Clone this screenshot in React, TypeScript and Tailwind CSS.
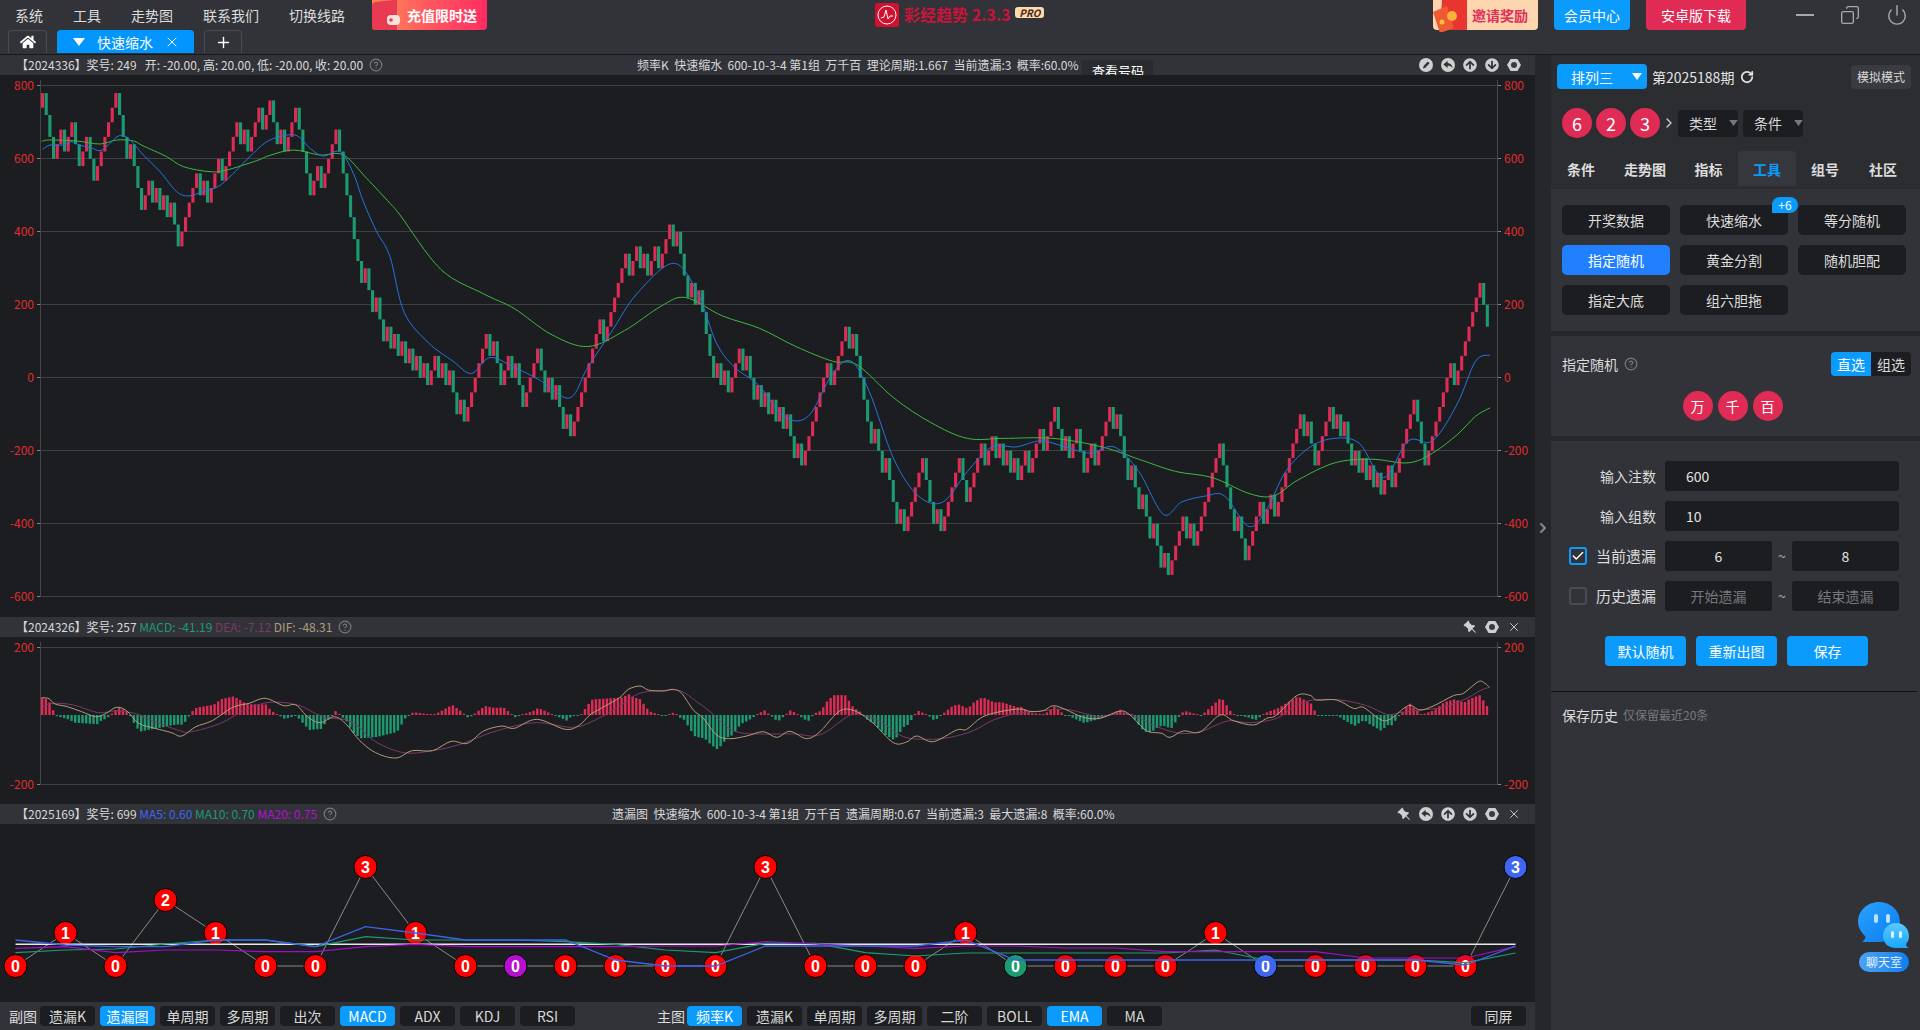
import React from 'react';
import { ChevronRight, CircleHelp, Check, Copy, Plus, Power, RotateCw, X } from 'lucide-react';
import { FaHome, FaArrowCircleUp, FaArrowCircleDown } from 'react-icons/fa';
import { BsPinAngleFill } from 'react-icons/bs';

type Pt = [number, number];

const curve = (pts: Pt[]) => {
  let d = `M${pts[0][0]} ${pts[0][1]}`;
  for (let i = 0; i < pts.length - 1; i++) {
    const p0 = pts[i - 1] || pts[i];
    const p1 = pts[i];
    const p2 = pts[i + 1];
    const p3 = pts[i + 2] || p2;
    d += `C${p1[0] + (p2[0] - p0[0]) / 6} ${p1[1] + (p2[1] - p0[1]) / 6} ${p2[0] - (p3[0] - p1[0]) / 6} ${p2[1] - (p3[1] - p1[1]) / 6} ${p2[0]} ${p2[1]}`;
  }
  return d;
};

const interp = (pts: Pt[], x: number) => {
  if (x <= pts[0][0]) return pts[0][1];
  for (let i = 0; i < pts.length - 1; i++) {
    if (x <= pts[i + 1][0]) {
      const t = (x - pts[i][0]) / (pts[i + 1][0] - pts[i][0]);
      return pts[i][1] + (pts[i + 1][1] - pts[i][1]) * t;
    }
  }
  return pts[pts.length - 1][1];
};

const S = 1920 / 1568;
const fromShot = (a: number[][]) => a.map(([x, y]) => [x * S, y * S] as Pt);

// main chart: each bar goes +40 or -60, so the steps are fixed
const BAR_GAP = 3.667;
const UP = 14.6;
const DOWN = 21.9;
const firstBars = 'RGGGRRGRRGGRRGGRRRRRRGGGRGGGRRGRGRGRGGRRRRRGRGRRRGRRRRGRGRRRGRRGGRGRRRGGGGRRGRRRRGGGGGG';

const priceTrack = fromShot([
  [285, 190], [295, 235], [305, 255], [315, 262], [325, 285], [340, 285], [355, 300], [370, 315], [380, 330], [392, 278],
  [405, 290], [415, 305], [425, 320], [438, 278], [445, 315], [458, 335], [465, 340], [475, 300], [490, 270], [505, 232],
  [520, 208], [535, 202], [550, 185], [560, 225], [570, 250], [580, 290], [590, 312], [605, 300], [620, 310], [632, 345],
  [645, 340], [657, 368], [665, 335], [678, 292], [690, 278], [700, 310], [712, 340], [725, 400], [735, 412], [748, 365],
  [760, 428], [775, 390], [790, 408], [800, 362], [815, 375], [830, 360], [845, 375], [860, 332], [870, 370], [885, 375],
  [900, 345], [915, 342], [925, 385], [935, 425], [955, 448], [975, 435], [995, 378], [1005, 415], [1020, 442], [1035, 410],
  [1058, 338], [1075, 365], [1090, 348], [1105, 370], [1125, 398], [1150, 325], [1160, 368], [1175, 340], [1190, 292], [1208, 234], [1217, 282],
]);

const candles = (() => {
  const out: { x: number; y: number; h: number; up: boolean }[] = [];
  let y = 107.7;
  for (let i = 0; i < 395; i++) {
    const x = 41 + i * BAR_GAP;
    let up: boolean;
    if (i < firstBars.length) up = firstBars[i] === 'R';
    else {
      const target = interp(priceTrack, x) + 12 * Math.sin(i * 0.62) + 7 * Math.sin(i * 0.19 + 1);
      up = y > target;
    }
    const next = up ? y - UP : y + DOWN;
    out.push({ x, y: Math.min(y, next), h: up ? UP : DOWN, up });
    y = next;
  }
  return out;
})();

const blueLine: Pt[] = [
  ...[[128, 268], [150, 255], [190, 255], [215, 245], [240, 256], [270, 262], [300, 272], [325, 255], [355, 228], [385, 235], [430, 285], [480, 335], [530, 395], [565, 408], [600, 398], [650, 382], [690, 350], [760, 280], [810, 240], [885, 225], [930, 265], [970, 288], [1020, 275], [1060, 340], [1090, 425], [1130, 515], [1170, 590]].map(([x, y]) => [x / 3, 60 + y / 3] as Pt),
  ...fromShot([[330, 255], [350, 280], [370, 295], [385, 305], [400, 292], [420, 300], [440, 310], [465, 325], [480, 300], [500, 270], [520, 240], [550, 215], [570, 240], [585, 280], [600, 300], [620, 315], [640, 340], [660, 340], [680, 305], [695, 295], [710, 320], [730, 375], [750, 405], [770, 410], [790, 385], [810, 365], [830, 365], [850, 360], [870, 365], [890, 370], [910, 365], [930, 385], [950, 420], [965, 410], [985, 405], [1000, 405], [1020, 430], [1035, 415], [1050, 385], [1070, 365], [1090, 358], [1110, 362], [1130, 390], [1150, 360], [1170, 360], [1190, 330], [1205, 295], [1217, 290]]),
];

const greenLine: Pt[] = [
  ...[[125, 244], [150, 240], [230, 243], [300, 252], [350, 240], [400, 243], [430, 258], [500, 290], [550, 320], [630, 335], [680, 330], [770, 302], [810, 286], [880, 270], [960, 285], [1030, 285], [1100, 355], [1170, 430], [1200, 465]].map(([x, y]) => [x / 3, 60 + y / 3] as Pt),
  ...fromShot([[360, 220], [395, 240], [420, 252], [450, 273], [480, 283], [510, 270], [540, 250], [560, 243], [590, 258], [620, 268], [650, 283], [680, 295], [700, 298], [730, 325], [760, 345], [790, 358], [820, 358], [860, 358], [900, 365], [930, 375], [960, 385], [990, 390], [1020, 403], [1040, 405], [1060, 392], [1090, 378], [1120, 375], [1150, 378], [1170, 370], [1190, 355], [1205, 340], [1217, 333]]),
];

// macd curves, read in three pieces
const macdPieces = (a: number[][], b: number[][], c: number[][]) => [
  ...a.map(([x, y]) => [x / 2.45, 600 + y / 3] as Pt).filter(p => p[0] < 620),
  ...b.map(([x, y]) => [620 + x / 3, 660 + y / 3] as Pt).filter(p => p[0] < 1100),
  ...c.map(([x, y]) => [1100 + x / 3, 660 + y / 3] as Pt),
];

const difLine = macdPieces(
  [[105, 293], [120, 296], [135, 312], [165, 320], [200, 335], [235, 350], [260, 340], [285, 322], [310, 332], [340, 370], [380, 385], [420, 398], [445, 408], [480, 380], [520, 362], [570, 322], [610, 310], [650, 295], [695, 317], [725, 315], [755, 352], [785, 368], [820, 350], [850, 375], [880, 420], [920, 458], [970, 474], [1010, 452], [1060, 452], [1105, 424], [1145, 430], [1185, 393], [1230, 378], [1260, 385], [1315, 358], [1385, 388], [1420, 375], [1445, 345], [1480, 320], [1520, 295]],
  [[0, 112], [25, 88], [60, 78], [85, 90], [130, 93], [160, 88], [185, 100], [220, 150], [250, 175], [290, 225], [330, 236], [380, 228], [430, 215], [470, 232], [510, 214], [560, 236], [600, 215], [640, 170], [670, 148], [710, 155], [760, 190], [820, 248], [860, 246], [890, 228], [940, 245], [1010, 210], [1040, 208], [1085, 172], [1140, 155], [1200, 147], [1230, 154], [1270, 152], [1300, 137], [1340, 150], [1390, 172], [1440, 178]],
  [[0, 175], [60, 153], [90, 165], [130, 205], [150, 216], [185, 220], [210, 232], [250, 213], [300, 216], [360, 165], [400, 182], [460, 195], [500, 175], [530, 165], [590, 107], [630, 106], [650, 120], [710, 120], [760, 145], [790, 142], [840, 178], [870, 178], [925, 137], [960, 150], [1000, 138], [1060, 107], [1090, 100], [1135, 65], [1155, 70], [1168, 82]],
);

const deaLine = macdPieces(
  [[105, 320], [130, 310], [180, 315], [240, 338], [280, 333], [330, 340], [370, 360], [440, 392], [470, 395], [540, 370], [600, 330], [660, 307], [730, 315], [790, 350], [860, 365], [920, 425], [990, 458], [1060, 452], [1130, 432], [1210, 395], [1310, 368], [1400, 382], [1450, 365], [1530, 318]],
  [[0, 138], [35, 112], [70, 97], [120, 92], [180, 92], [230, 125], [270, 155], [320, 200], [360, 218], [420, 222], [520, 222], [580, 228], [620, 215], [660, 185], [700, 162], [740, 168], [790, 190], [850, 230], [920, 238], [990, 232], [1060, 212], [1120, 180], [1190, 160], [1250, 155], [1330, 147], [1400, 162]],
  [[0, 170], [70, 160], [120, 175], [170, 200], [240, 220], [300, 215], [350, 195], [390, 182], [450, 188], [530, 175], [590, 135], [640, 120], [720, 120], [800, 137], [860, 163], [900, 158], [960, 150], [1030, 142], [1100, 115], [1140, 92], [1168, 82]],
);

const missLevels = [0, 1, 0, 2, 1, 0, 0, 3, 1, 0, 0, 0, 0, 0, 0, 3, 0, 0, 0, 1, 0, 0, 0, 0, 1, 0, 0, 0, 0, 0, 3];
const missColors: Record<number, string> = { 10: '#b810d0', 20: '#1c9b72', 25: '#3f66f0', 30: '#3f66f0' };
const ma5 = [940, 945, 946.7, 946.7, 940, 940, 946.7, 926.7, 933, 940, 940, 940, 960, 966, 966, 946, 946, 946, 946, 940, 960, 960, 960, 960, 960, 960, 960, 960, 960, 965, 946];
const ma10 = [952.7, 950, 949, 944, 940, 940, 946.7, 936.7, 940, 940, 940, 941.7, 944.3, 950, 952.7, 943.3, 943.3, 952.7, 956, 953, 953, 953, 953, 953, 950, 960, 960, 960, 960, 962.7, 953];
const ma20 = [948.3, 946.7, 952.7, 950, 950, 951.7, 951.7, 946.7, 944.3, 946.7, 946.7, 946.7, 946.7, 946, 946, 941.7, 944, 946, 948.3, 946, 946, 948, 948, 951.7, 951.7, 951.7, 951.7, 958, 958, 958, 946.7];
const missX = (i: number) => 15.5 + i * 50;
const maPoints = (a: number[]) => a.map((y, i) => `${missX(i)},${y}`).join(' ');

function Axis({ ticks, top, bottom }: { ticks: { v: number; y: number }[]; top: number; bottom: number }) {
  return (
    <g>
      {ticks.map(t => (
        <g key={t.v}>
          <line x1="40.5" x2="1497.5" y1={t.y + 0.5} y2={t.y + 0.5} stroke="#3f4045" />
          <line x1="37" x2="40" y1={t.y + 0.5} y2={t.y + 0.5} stroke="#888" />
          <line x1="1498" x2="1501" y1={t.y + 0.5} y2={t.y + 0.5} stroke="#888" />
          <text x="34" y={t.y + 4.5} textAnchor="end" fontSize="12" fill="#e22c2c">{t.v}</text>
          <text x="1504" y={t.y + 4.5} fontSize="12" fill="#e22c2c">{t.v}</text>
        </g>
      ))}
      <line x1="40.5" x2="40.5" y1={top} y2={bottom} stroke="#45464b" />
      <line x1="1497.5" x2="1497.5" y1={top} y2={bottom} stroke="#45464b" />
    </g>
  );
}

function MainChart() {
  const ticks = [800, 600, 400, 200, 0, -200, -400, -600].map((v, i) => ({ v, y: 85 + i * 73 }));
  return (
    <svg viewBox="0 75 1535 542" className="block w-[1535px] h-[542px] bg-[#1c1d21]">
      <Axis ticks={ticks} top={80} bottom={597} />
      {candles.map((c, i) => (
        <rect key={i} x={c.x} y={c.y} width="3.1" height={c.h} fill={c.up ? '#e02b55' : '#1c9b72'} />
      ))}
      <path d={curve(greenLine)} fill="none" stroke="#3eb83e" strokeWidth="1" />
      <path d={curve(blueLine)} fill="none" stroke="#2474e0" strokeWidth="1" />
    </svg>
  );
}

function MacdChart() {
  const ticks = [{ v: 200, y: 647 }, { v: -200, y: 784 }];
  const bars = Array.from({ length: 395 }, (_, i) => {
    const x = 41 + i * BAR_GAP;
    const v = (interp(deaLine, x) - interp(difLine, x)) * 2;
    return { x, v };
  });
  return (
    <svg viewBox="0 637 1535 167" className="block w-[1535px] h-[167px] bg-[#1c1d21]">
      <Axis ticks={ticks} top={642} bottom={785} />
      {bars.map((b, i) => {
        const h = Math.max(Math.abs(b.v), 1);
        return <rect key={i} x={b.x} y={b.v > 0 ? 715 - h : 715} width="2.4" height={h} fill={b.v > 0 ? '#e02b55' : '#1c9b72'} />;
      })}
      <path d={curve(deaLine)} fill="none" stroke="#7a3a66" strokeWidth="1" />
      <path d={curve(difLine)} fill="none" stroke="#b39b7a" strokeWidth="1" />
    </svg>
  );
}

function MissChart() {
  const levelY = (l: number) => 966 - l * 33;
  return (
    <svg viewBox="0 824 1535 178" className="block w-[1535px] h-[178px] bg-[#1c1d21]">
      <polyline points={missLevels.map((l, i) => `${missX(i)},${levelY(l)}`).join(' ')} fill="none" stroke="#8a8a8a" strokeWidth="1" />
      {missLevels.map((l, i) => (
        <g key={i}>
          <circle cx={missX(i)} cy={levelY(l)} r="11.5" fill={missColors[i] || '#ff0000'} stroke="#000" />
          <text x={missX(i)} y={levelY(l) + 5.5} textAnchor="middle" fontSize="16" fontWeight="700" fill="#fff" fontFamily="'Liberation Sans', sans-serif">{l}</text>
        </g>
      ))}
      <line x1={missX(0)} x2={missX(30)} y1="944.3" y2="944.3" stroke="#e8e8e8" strokeWidth="1.4" />
      <polyline points={maPoints(ma10)} fill="none" stroke="#1c9b72" strokeWidth="1.2" />
      <polyline points={maPoints(ma20)} fill="none" stroke="#a010c8" strokeWidth="1.2" />
      <polyline points={maPoints(ma5)} fill="none" stroke="#3b63e8" strokeWidth="1.3" />
    </svg>
  );
}

function PaneIcon({ name }: { name: string }) {
  if (name === 'up') return <FaArrowCircleUp className="w-[14px] h-[14px] text-[#cfcfcf]" />;
  if (name === 'down') return <FaArrowCircleDown className="w-[14px] h-[14px] text-[#cfcfcf]" />;
  if (name === 'pin') return <BsPinAngleFill className="w-[14px] h-[14px] text-[#cfcfcf] -scale-x-100" />;
  if (name === 'close') return <X className="w-[14px] h-[14px] text-[#cfcfcf]" strokeWidth={1.6} />;
  return (
    <svg viewBox="0 0 14 14" className="w-[14px] h-[14px]">
      {name === 'gear' ? (
        <>
          <path d="M3.6 1h6.8L14 7l-3.6 6H3.6L0 7z" fill="#cfcfcf" />
          <circle cx="7" cy="7" r="3" fill="#3a3b40" />
        </>
      ) : (
        <>
          <circle cx="7" cy="7" r="7" fill="#cfcfcf" />
          {name === 'pencil' && <path d="M4 10.5l.6-2.4 4.2-4.6 1.8 1.7-4.2 4.6z" fill="#333" />}
          {name === 'undo' && <path d="M2.4 6.4L6.6 2.8v2.3c3 .1 4.6 2 5 4.8-1.2-1.7-2.8-2.2-5-2.2v2.3z" fill="#333" />}
        </>
      )}
    </svg>
  );
}

function PaneHeader({ leftWidth, left, center, icons, button }: { leftWidth: number; left: React.ReactNode; center?: string; icons: string[]; button?: boolean }) {
  return (
    <div className="h-5 flex items-center overflow-hidden bg-[#313338] text-xs text-[#d8d8d8] whitespace-nowrap shrink-0">
      <div className="shrink-0 flex items-center gap-[6px] pl-[16px]" style={{ width: leftWidth }}>
        {left}
        <CircleHelp className="w-[14px] h-[14px] text-[#77787c]" />
      </div>
      {center && <div className="whitespace-pre">{center}</div>}
      {button && <div className="ml-1 mt-[10px] w-[71px] h-[20px] pt-[2px] bg-[#2a2b2f] text-center text-[13px] text-white">查看号码</div>}
      <div className="ml-auto flex items-center gap-2 pr-[14px]">
        {icons.map(n => <PaneIcon key={n} name={n} />)}
      </div>
    </div>
  );
}

function BarButton({ label, on }: { label: string; on?: boolean }) {
  return (
    <button className={`w-[55px] h-5 rounded text-sm flex items-center justify-center ${on ? 'bg-[#0a9bfd] text-white' : 'bg-[#1c1d21] text-[#d8d8d8]'}`}>
      {label}
    </button>
  );
}

function TopBar() {
  return (
    <div className="h-[55px] shrink-0 bg-[#313338] border-b border-[#17181b] relative">
      <div className="h-[30px] flex items-center">
        <div className="flex items-center gap-[30px] pl-[15px] text-sm text-[#dcdcdc]">
          <span>系统</span>
          <span>工具</span>
          <span>走势图</span>
          <span>联系我们</span>
          <span>切换线路</span>
        </div>
        <div className="ml-[27px] w-[115px] h-[30px] rounded-b relative bg-gradient-to-r from-[#ff8a50] via-[#ff5560] to-[#ff2a62] flex items-center pl-[35px] text-sm font-bold text-white">
          <svg viewBox="0 0 30 30" className="absolute left-0 top-0 w-[30px] h-[30px]">
            <path d="M0 5Q0 3 3 2L22 0h3v30H4Q0 30 0 27z" fill="#e83a50" />
            <path d="M25 12v14H6" fill="none" />
            <rect x="15" y="15" width="13" height="10" rx="4" fill="#fbe3dc" />
            <circle cx="19" cy="20" r="1.8" fill="#e83a50" />
          </svg>
          充值限时送
        </div>
        <div className="ml-auto flex items-center">
          <div className="w-[105px] h-[30px] rounded-b bg-[#fdd5ae] relative flex items-center justify-end pr-[10px] text-sm font-bold text-[#e0305a]">
            <svg viewBox="0 0 34 32" className="absolute left-0 top-0 w-[34px] h-[32px]">
              <path d="M9 0h25v30H7z" fill="#e8352f" />
              <path d="M0 12l14-6 7 22-14 5z" fill="#f05a32" />
              <circle cx="19" cy="16" r="5" fill="#f7b23b" />
              <circle cx="9" cy="22" r="2.5" fill="#f7c23b" />
            </svg>
            邀请奖励
          </div>
          <div className="ml-[16px] w-[76px] h-[30px] rounded-b bg-[#0a9bfd] flex items-center justify-center text-sm text-white">会员中心</div>
          <div className="ml-[16px] w-[100px] h-[30px] rounded-b bg-[#e02b55] flex items-center justify-center text-sm text-white">安卓版下载</div>
          <div className="w-[174px] flex items-center text-[#a8a8a8] pl-[50px]">
            <div className="w-[18px] h-[2px] bg-[#a8a8a8]" />
            <Copy className="ml-[26px] w-[20px] h-[20px] -scale-x-100" strokeWidth={1.6} />
            <Power className="ml-[26px] w-[22px] h-[22px]" strokeWidth={1.6} />
          </div>
        </div>
      </div>
      <div className="h-[23px] flex items-end pl-2 text-white">
        <div className="w-[39px] h-[23px] border border-b-0 border-[#4a4b50] rounded-t flex items-center justify-center">
          <FaHome className="w-[16px] h-[16px]" />
        </div>
        <div className="ml-[10px] w-[137px] h-[23px] bg-[#0095ff] rounded-t flex items-center pl-4 text-sm">
          <svg viewBox="0 0 12 8" className="w-3 h-2"><path d="M0 0h12L6 8z" fill="#fff" /></svg>
          <span className="ml-[12px]">快速缩水</span>
          <X className="ml-[11px] w-[16px] h-[16px]" strokeWidth={1.5} />
        </div>
        <div className="ml-[10px] w-[38px] h-[23px] border border-b-0 border-[#4a4b50] rounded-t flex items-center justify-center">
          <Plus className="w-[17px] h-[17px]" strokeWidth={2} />
        </div>
      </div>
      {/* logo */}
      <div className="absolute left-[875px] top-[3px] flex items-start">
        <svg viewBox="0 0 24 24" className="w-6 h-6">
          <rect width="24" height="24" rx="3" fill="#d0102e" />
          <circle cx="12" cy="12" r="9" fill="none" stroke="#fff" strokeWidth="1" />
          <path d="M6 15l3-1 2-7 2 9 2-3h3" fill="none" stroke="#fff" strokeWidth="1" />
        </svg>
        <span className="ml-[5px] mt-[-1px] text-base leading-6 font-bold text-[#c8143a]">彩经趋势 2.3.3</span>
        <span className="ml-[5px] mt-1 w-[29px] h-[11px] rounded-[3px] bg-[#fdd9b0] text-[10px] leading-[11px] font-bold italic text-[#4a2a10] text-center">PRO</span>
      </div>
    </div>
  );
}

function SelectBox({ label }: { label: string }) {
  return (
    <div className="w-[60px] h-[27px] bg-[#1c1d21] rounded flex items-center pl-[11px] text-sm text-[#d8d8d8]">
      {label}
      <svg viewBox="0 0 10 7" className="ml-[12px] w-[9px] h-[6px]"><path d="M0 0h10L5 7z" fill="#77787c" /></svg>
    </div>
  );
}

function Ball({ label, small }: { label: string; small?: boolean }) {
  return (
    <div className={`w-[30px] h-[30px] rounded-full bg-[#e02b55] flex items-center justify-center text-white ${small ? 'text-sm' : 'text-lg'}`}>
      {label}
    </div>
  );
}

function ToolBtn({ label, on, badge }: { label: string; on?: boolean; badge?: string }) {
  return (
    <button className={`relative h-[30px] rounded-[5px] text-sm flex items-center justify-center ${on ? 'bg-[#2080ff] text-white' : 'bg-[#1c1d21] text-[#dcdcdc]'}`}>
      {label}
      {badge && (
        <span className="absolute right-[-10px] top-[-8px] w-[26px] h-[16px] rounded-t-lg rounded-br-lg bg-[#0a9bfd] text-xs leading-4 text-white">{badge}</span>
      )}
    </button>
  );
}

function Field({ value, placeholder, center }: { value?: string; placeholder?: string; center?: boolean }) {
  return (
    <div className={`h-[30px] rounded-[3px] bg-[#1c1d21] flex items-center text-sm ${center ? 'w-[107px] justify-center' : 'w-[234px] pl-[21px]'} ${value ? 'text-[#e4e4e4]' : 'text-[#77787c]'}`}>
      {value || placeholder}
    </div>
  );
}

function SidePanel() {
  const tabs = [
    { label: '条件', w: 'w-[60px]' },
    { label: '走势图', w: 'w-[68px]' },
    { label: '指标', w: 'w-[59px]' },
    { label: '工具', w: 'w-[58px]', on: true },
    { label: '组号', w: 'w-[58px]' },
    { label: '社区', w: 'w-[58px]' },
  ];
  return (
    <div className="w-[369px] shrink-0 flex flex-col bg-[#323338] relative">
      <div className="h-[134px] bg-[#2b2d31] pt-[9px]">
        <div className="h-[25px] flex items-center pl-[6px] text-sm text-[#e4e4e4]">
          <div className="w-[90px] h-[25px] rounded-sm bg-[#0a9bfd] flex items-center pl-[14px] text-white">
            排列三
            <svg viewBox="0 0 10 7" className="ml-[19px] w-[10px] h-[7px]"><path d="M0 0h10L5 7z" fill="#fff" /></svg>
          </div>
          <span className="ml-[5px]">第2025188期</span>
          <RotateCw className="ml-[6px] w-[14px] h-[14px]" strokeWidth={3} />
          <div className="ml-auto mr-[9px] w-[60px] h-[24px] rounded-sm bg-[#3a3b40] flex items-center justify-center text-xs text-[#d8d8d8]">模拟模式</div>
        </div>
        <div className="mt-[19px] flex items-center pl-[11px]">
          <div className="flex gap-1">
            <Ball label="6" />
            <Ball label="2" />
            <Ball label="3" />
          </div>
          <ChevronRight className="w-[16px] h-[16px] ml-[1px] text-[#cfcfcf]" strokeWidth={2} />
          <div className="ml-[1px] flex gap-[5px]">
            <SelectBox label="类型" />
            <SelectBox label="条件" />
          </div>
        </div>
        <div className="mt-[13px] flex h-[35px]">
          {tabs.map(t => (
            <div key={t.label} className={`${t.w} flex items-center justify-center text-sm font-bold rounded-t ${t.on ? 'bg-[#36373c] text-[#0a9bfd]' : 'text-[#dcdcdc]'}`}>
              {t.label}
            </div>
          ))}
        </div>
      </div>
      <div className="h-[142px] pt-4 pl-[11px]">
        <div className="grid grid-cols-[108px_108px_108px] gap-[10px]">
          <ToolBtn label="开奖数据" />
          <ToolBtn label="快速缩水" badge="+6" />
          <ToolBtn label="等分随机" />
          <ToolBtn label="指定随机" on />
          <ToolBtn label="黄金分割" />
          <ToolBtn label="随机胆配" />
          <ToolBtn label="指定大底" />
          <ToolBtn label="组六胆拖" />
        </div>
      </div>
      <div className="h-[5px] bg-[#25272b]" />
      <div className="h-[100px] pl-[11px] pr-[9px] pt-4">
        <div className="flex items-center h-6 text-sm text-[#dcdcdc]">
          指定随机
          <CircleHelp className="ml-[6px] w-[14px] h-[14px] text-[#77787c]" />
          <div className="ml-auto flex w-[80px] h-6 rounded overflow-hidden">
            <span className="w-10 bg-[#0a9bfd] text-white text-center leading-6">直选</span>
            <span className="w-10 bg-[#1c1d21] text-center leading-6">组选</span>
          </div>
        </div>
        <div className="mt-[15px] flex justify-center gap-[5px] pr-[8px]">
          <Ball label="万" small />
          <Ball label="千" small />
          <Ball label="百" small />
        </div>
      </div>
      <div className="h-[5px] bg-[#25272b]" />
      <div className="flex-1 flex flex-col">
        <div className="pt-5 pl-[18px] flex flex-col gap-[10px] text-sm text-[#dcdcdc]">
          <div className="flex items-center">
            <span className="w-[87px] text-right">输入注数</span>
            <span className="ml-[9px]"><Field value="600" /></span>
          </div>
          <div className="flex items-center">
            <span className="w-[87px] text-right">输入组数</span>
            <span className="ml-[9px]"><Field value="10" /></span>
          </div>
          <div className="flex items-center">
            <span className="w-[18px] h-[18px] rounded-[3px] border-2 border-[#0a9bfd] flex items-center justify-center text-white">
              <Check className="w-[14px] h-[14px]" strokeWidth={2.5} />
            </span>
            <span className="ml-[9px] w-[60px] text-[15px] text-right">当前遗漏</span>
            <span className="ml-[9px]"><Field value="6" center /></span>
            <span className="w-5 text-center text-[#a8a8a8]">~</span>
            <Field value="8" center />
          </div>
          <div className="flex items-center">
            <span className="w-[18px] h-[18px] rounded-[3px] border-2 border-[#4a4b50]" />
            <span className="ml-[9px] w-[60px] text-[15px] text-right">历史遗漏</span>
            <span className="ml-[9px]"><Field placeholder="开始遗漏" center /></span>
            <span className="w-5 text-center text-[#a8a8a8]">~</span>
            <Field placeholder="结束遗漏" center />
          </div>
        </div>
        <div className="mt-[25px] pl-[54px] flex gap-[10px]">
          {['默认随机', '重新出图', '保存'].map(l => (
            <button key={l} className="w-[81px] h-[30px] rounded bg-[#0a9bfd] text-sm text-white">{l}</button>
          ))}
        </div>
        <div className="mt-[25px] mr-[3px] h-px bg-[#101114]" />
        <div className="mt-[13px] pl-[11px] flex items-center gap-[5px] text-[#dcdcdc] text-sm">
          保存历史
          <span className="text-xs text-[#77787c]">仅保留最近20条</span>
        </div>
      </div>
      {/* chat bubble */}
      <div className="absolute left-[307px] top-[847px] w-[52px] flex flex-col items-center">
        <svg viewBox="0 0 52 48" className="w-[52px] h-[48px]">
          <defs>
            <linearGradient id="bigB" x1="0" y1="0" x2="1" y2="1"><stop offset="0" stopColor="#2aa2ff" /><stop offset="1" stopColor="#0a7cf0" /></linearGradient>
            <linearGradient id="smallB" x1="0" y1="0" x2="0" y2="1"><stop offset="0" stopColor="#5cc8ff" /><stop offset="1" stopColor="#18a8ff" /></linearGradient>
          </defs>
          <path d="M21 0c12 0 21 9 21 20s-9 20-21 20H4c3-2 4-5 3-6C3 30 0 25 0 20 0 9 9 0 21 0z" fill="url(#bigB)" />
          <rect x="16" y="12" width="4" height="9" rx="2" fill="#b8e2ff" />
          <rect x="28" y="12" width="4" height="9" rx="2" fill="#b8e2ff" />
          <path d="M38 21c8 0 13 6 13 13 0 3-1 6-3 8 0 2 1 3 3 4H38c-8 0-13-5-13-12s5-13 13-13z" fill="url(#smallB)" />
          <rect x="33" y="29" width="3" height="7" rx="1.5" fill="#d8f2ff" />
          <rect x="41" y="29" width="3" height="7" rx="1.5" fill="#d8f2ff" />
        </svg>
        <div className="mt-[2px] w-[50px] h-[20px] rounded-[10px] bg-gradient-to-r from-[#4aa4f5] to-[#0a7fee] text-center text-xs leading-5 text-[#e8f3ff]">聊天室</div>
      </div>
    </div>
  );
}

export default function App() {
  return (
    <div className="w-[1920px] h-[1030px] overflow-hidden flex flex-col bg-[#25272b] font-['Noto_Sans_CJK_SC','Noto_Sans',sans-serif]">
      <TopBar />
      <div className="flex-1 flex min-h-0">
        {/* charts */}
        <div className="w-[1535px] shrink-0 flex flex-col">
          <PaneHeader
            leftWidth={637}
            left={<span className="whitespace-pre">【2024336】奖号: 249   开: -20.00, 高: 20.00, 低: -20.00, 收: 20.00</span>}
            center={'频率K  快速缩水  600-10-3-4 第1组  万千百  理论周期:1.667  当前遗漏:3  概率:60.0%'}
            icons={['pencil', 'undo', 'up', 'down', 'gear']}
            button
          />
          <MainChart />
          <PaneHeader
            leftWidth={637}
            left={
              <span>
                【2024326】奖号: 257 <span className="text-[#1c9b72]">MACD: -41.19</span> <span className="text-[#7a3a66]">DEA: -7.12</span> <span className="text-[#b39b7a]">DIF: -48.31</span>
              </span>
            }
            icons={['pin', 'gear', 'close']}
          />
          <MacdChart />
          <PaneHeader
            leftWidth={612}
            left={
              <span>
                【2025169】奖号: 699 <span className="text-[#3f66f0]">MA5: 0.60</span> <span className="text-[#1c9b72]">MA10: 0.70</span> <span className="text-[#b810d0]">MA20: 0.75</span>
              </span>
            }
            center={'遗漏图  快速缩水  600-10-3-4 第1组  万千百  遗漏周期:0.67  当前遗漏:3  最大遗漏:8  概率:60.0%'}
            icons={['pin', 'undo', 'up', 'down', 'gear', 'close']}
          />
          <MissChart />
          <div className="h-[28px] shrink-0 bg-[#313338] flex items-center pl-[9px] text-sm text-[#dcdcdc]">
            <span className="w-[31px]">副图</span>
            <div className="flex gap-[5px]">
              <BarButton label="遗漏K" />
              <BarButton label="遗漏图" on />
              <BarButton label="单周期" />
              <BarButton label="多周期" />
              <BarButton label="出次" />
              <BarButton label="MACD" on />
              <BarButton label="ADX" />
              <BarButton label="KDJ" />
              <BarButton label="RSI" />
            </div>
            <span className="ml-[82px] w-[30px]">主图</span>
            <div className="flex gap-[5px]">
              <BarButton label="频率K" on />
              <BarButton label="遗漏K" />
              <BarButton label="单周期" />
              <BarButton label="多周期" />
              <BarButton label="二阶" />
              <BarButton label="BOLL" />
              <BarButton label="EMA" on />
              <BarButton label="MA" />
            </div>
            <div className="ml-auto mr-[9px]"><BarButton label="同屏" /></div>
          </div>
        </div>
        {/* gutter */}
        <div className="w-4 shrink-0 flex items-center justify-center pb-[30px]">
          <ChevronRight className="w-[16px] h-[20px] text-[#8a8a8a]" strokeWidth={3} />
        </div>
        <SidePanel />
      </div>
    </div>
  );
}
